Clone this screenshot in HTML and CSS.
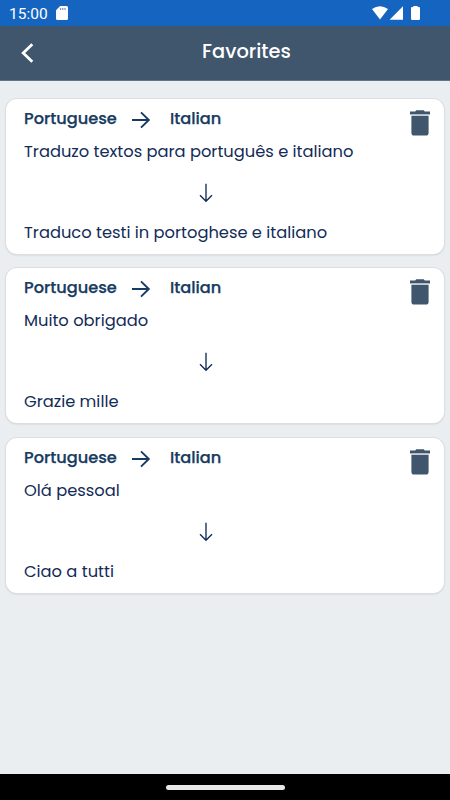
FILE: index.html
```html
<!DOCTYPE html>
<html lang="en">
<head>
<meta charset="utf-8">
<title>Favorites</title>
<link rel="stylesheet" href="styles.css">
</head>
<body>
<svg class="sprite" aria-hidden="true">
  <symbol id="right" viewBox="0 0 20 18"><path d="M1 9H18M10 1.4L17.8 9L10 16.6" fill="none" stroke="currentColor" stroke-width="1.9"/></symbol>
  <symbol id="down" viewBox="0 0 14 20"><path d="M7 .8V18M1 12.2L7 18.2L13 12.2" fill="none" stroke="currentColor" stroke-width="1.35"/></symbol>
  <symbol id="trash" viewBox="0 0 20 26"><path d="M0 1.5H5.3L6.2.2H13.8L14.7 1.5H20V4.4H0ZM1.4 6H18.6V22.7Q18.6 25.6 15.7 25.6H4.3Q1.4 25.6 1.4 22.7Z" fill="currentColor"/><path d="M1.4 4.4H18.6V6H1.4Z" fill="#c5ccd3"/></symbol>
</svg>
<div class="screen">
  <div class="status">
    <span class="time">15:00</span>
    <svg class="sd" viewBox="0 0 12 14"><path d="M4.2 0H10.5Q12 0 12 1.5V12.5Q12 14 10.5 14H1.5Q0 14 0 12.5V4.2Z" fill="#fff"/><path d="M4.6 2V4M6.8 2V4M9 2V4" stroke="#8295c8" stroke-width="1.3"/></svg>
    <svg class="signals" viewBox="0 0 48 15"><path d="M0 3.1Q8-2.8 16 3.1L8 13.5ZM31 .2V13.8H17.6ZM39 2Q39 1 40 1H41.3V0H45.7V1H47Q48 1 48 2V12.8Q48 14 46.8 14H40.2Q39 14 39 12.8Z" fill="#fff"/></svg>
  </div>
  <header class="bar">
    <svg class="back" viewBox="0 0 13 20"><path d="M11.3 1.3L2.2 10L11.3 18.7" fill="none" stroke="#fff" stroke-width="2.8"/></svg>
    <h1>Favorites</h1>
  </header>
  <main>
    <article class="card">
      <div class="langs"><span class="from">Portuguese</span><svg class="right"><use href="#right"/></svg><span class="to">Italian</span><svg class="trash"><use href="#trash"/></svg></div>
      <p>Traduzo textos para português e italiano</p>
      <svg class="down"><use href="#down"/></svg>
      <p>Traduco testi in portoghese e italiano</p>
    </article>
    <article class="card">
      <div class="langs"><span class="from">Portuguese</span><svg class="right"><use href="#right"/></svg><span class="to">Italian</span><svg class="trash"><use href="#trash"/></svg></div>
      <p>Muito obrigado</p>
      <svg class="down"><use href="#down"/></svg>
      <p>Grazie mille</p>
    </article>
    <article class="card">
      <div class="langs"><span class="from">Portuguese</span><svg class="right"><use href="#right"/></svg><span class="to">Italian</span><svg class="trash"><use href="#trash"/></svg></div>
      <p>Olá pessoal</p>
      <svg class="down"><use href="#down"/></svg>
      <p>Ciao a tutti</p>
    </article>
  </main>
  <footer class="nav"><div class="pill"></div></footer>
</div>
</body>
</html>
```
FILE: styles.css
```css
* { box-sizing: border-box; margin: 0; padding: 0; }
body { background: #eaeef1; font-family: Poppins, Inter, sans-serif; color: #122c58; }
.sprite { display: none; }
svg { display: block; flex: none; }
.screen { width: 450px; height: 800px; display: flex; flex-direction: column; overflow: hidden; }
.status { height: 26px; flex: none; background: #1565c0; display: flex; align-items: center; padding: 0 30px 0 9px; color: #fff; }
.time { font: 15.5px/26px Roboto, sans-serif; width: 47px; padding-top: 1px; }
.sd { width: 12px; height: 14px; }
.signals { width: 48px; height: 15px; margin-left: auto; }
.bar { height: 55px; flex: none; background: #3f566d; border-bottom: 1px solid #60768a; display: grid; grid-template-columns: 43px 1fr; align-items: center; }
.back { width: 13px; height: 20px; margin-left: 21px; }
h1 { color: #fff; font-size: 19.4px; font-weight: 500; line-height: 28px; text-align: center; margin-top: -2px; }
main { flex: 1; padding: 18px 6px 0; display: flex; flex-direction: column; gap: 14.4px; }
.card { height: 155px; flex: none; background: #fff; border-radius: 11px; padding: 4px 14px 0 18px; box-shadow: 0 0 0 1px #dcdedf, 0 1px 2px #bfc2c4; }
.langs { height: 33px; display: flex; font-size: 16.2px; line-height: 31px; font-weight: 500; color: #173b61; -webkit-text-stroke: .25px #173b61; }
.from { width: 107px; }
.right { width: 20px; height: 18px; margin-top: 8px; }
.to { margin-left: 19px; }
.trash { width: 20px; height: 26px; margin: 7px 0 0 auto; color: #3f566d; }
p { font-size: 16.3px; line-height: 31px; height: 30px; white-space: nowrap; }
.down { width: 14px; height: 20px; margin: 17px 0 14px 174.5px; }
.nav { height: 26px; flex: none; background: #000; display: flex; justify-content: center; align-items: center; }
.pill { width: 119px; height: 5px; border-radius: 3px; background: #e8e8e8; }
```
